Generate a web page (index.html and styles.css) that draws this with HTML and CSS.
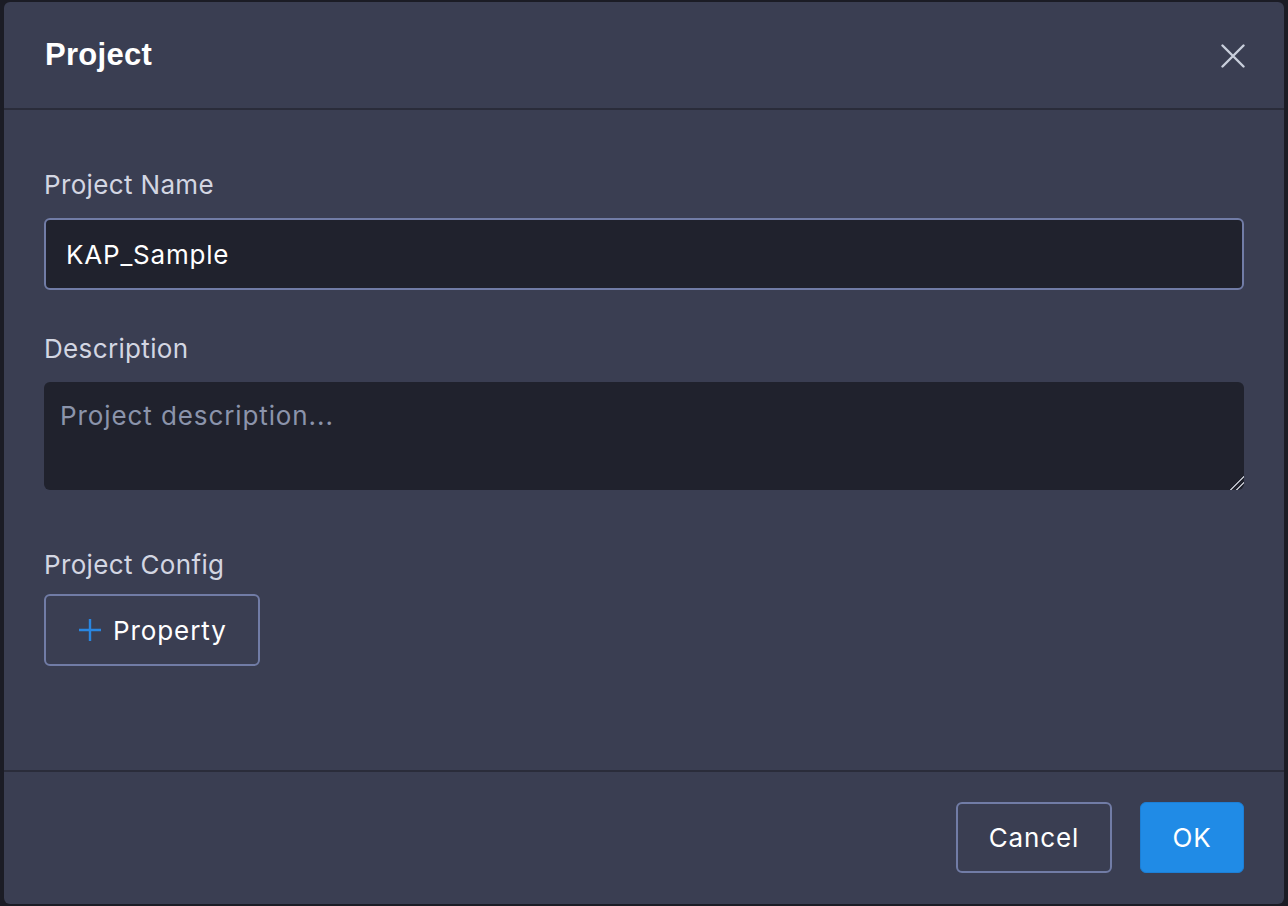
FILE: index.html
```html
<!DOCTYPE html>
<html lang="en">
<head>
<meta charset="utf-8">
<title>Project</title>
<link rel="stylesheet" href="styles.css">
</head>
<body>
<div class="backdrop">
  <div class="modal">
    <div class="modal-header">
      <h1 class="modal-title">Project</h1>
      <button class="close-btn" aria-label="Close">
        <svg width="24" height="24" viewBox="0 0 24 24"><path d="M1.5 1.5 L22.5 22.5 M22.5 1.5 L1.5 22.5" stroke="#c9cfdc" stroke-width="2.4" stroke-linecap="round" fill="none"/></svg>
      </button>
    </div>
    <div class="modal-body">
      <div class="field">
        <label class="label">Project Name</label>
        <input class="input" type="text" value="KAP_Sample">
      </div>
      <div class="field">
        <label class="label">Description</label>
        <textarea class="textarea" placeholder="Project description..."></textarea>
      </div>
      <div class="field field-config">
        <label class="label">Project Config</label>
        <div><button class="btn btn-outline btn-property">
          <svg width="22" height="22" viewBox="0 0 22 22"><path d="M11 0 V22 M0 11 H22" stroke="#2a86e0" stroke-width="2.4" fill="none"/></svg>
          <span>Property</span>
        </button></div>
      </div>
    </div>
    <div class="modal-footer">
      <button class="btn btn-outline btn-cancel">Cancel</button>
      <button class="btn btn-primary">OK</button>
    </div>
  </div>
</div>
</body>
</html>
```

FILE: styles.css
```css
html, body {
  margin: 0;
  padding: 0;
  height: 100%;
}
body {
  background: #1b1c25;
  font-family: Inter, "Noto Sans", sans-serif;
}
.backdrop {
  height: 906px;
  padding: 2px 4px;
  box-sizing: border-box;
}
.modal {
  background: #3a3e52;
  border-radius: 6px;
  height: 902px;
  display: flex;
  flex-direction: column;
}
.modal-header {
  height: 106px;
  flex: none;
  display: flex;
  align-items: center;
  justify-content: space-between;
  padding: 0 39px 0 41px;
  border-bottom: 2px solid #2a2c3a;
}
.modal-title {
  margin: 0;
  color: #ffffff;
  font-family: "Liberation Sans", Arial, sans-serif;
  font-weight: 700;
  font-size: 31px;
  letter-spacing: 0.3px;
}
.close-btn {
  background: none;
  border: none;
  padding: 0;
  width: 24px;
  height: 24px;
  display: flex;
  margin-top: 2px;
}
.modal-body {
  flex: 1;
  padding: 59px 40px 0 40px;
  display: flex;
  flex-direction: column;
}
.field {
  display: flex;
  flex-direction: column;
}
.label {
  color: #d3d6e2;
  font-size: 26px;
  line-height: 32px;
  letter-spacing: 0.35px;
  margin-bottom: 17px;
}
.input {
  height: 72px;
  box-sizing: border-box;
  border: 2px solid #717ca6;
  border-radius: 6px;
  background: #20222d;
  color: #ffffff;
  font-family: inherit;
  font-size: 26px;
  letter-spacing: 0.8px;
  padding: 0 20px;
  margin-bottom: 43px;
  outline: none;
}
.textarea {
  height: 108px;
  box-sizing: border-box;
  border: 0;
  border-radius: 6px;
  background: #20222d;
  color: #ffffff;
  font-family: inherit;
  font-size: 26px;
  letter-spacing: 0.9px;
  line-height: 32px;
  padding: 18px 16px;
  margin: 0 0 59px 0;
  resize: vertical;
  outline: none;
}
.textarea::placeholder {
  color: #8b94ab;
}
.textarea::-webkit-resizer {
  background: linear-gradient(135deg, transparent 0 52%, #b4b7c0 52% 60%, transparent 60% 72%, #b4b7c0 72% 80%, transparent 80%);
}
.field-config .label {
  margin-bottom: 13px;
}
.btn {
  font-family: inherit;
  font-size: 26px;
  letter-spacing: 0.9px;
  height: 72px;
  box-sizing: border-box;
  border-radius: 6px;
  cursor: pointer;
  color: #ffffff;
}
.btn-outline {
  background: transparent;
  border: 2px solid #717ca6;
}
.btn-property {
  display: inline-flex;
  align-items: center;
  gap: 12px;
  padding: 0 0 0 33px;
  width: 216px;
}
.btn-property svg {
  width: 22px;
  height: 22px;
  flex: none;
}
.modal-footer {
  flex: none;
  height: 134px;
  box-sizing: border-box;
  border-top: 2px solid #2a2c3a;
  display: flex;
  justify-content: flex-end;
  align-items: flex-start;
  gap: 28px;
  padding: 30px 40px 0 0;
}
.btn-cancel {
  width: 156px;
  height: 71px;
}
.btn-primary {
  width: 104px;
  height: 71px;
  background: #208be6;
  border: 1px solid #1c7fd6;
}
```
